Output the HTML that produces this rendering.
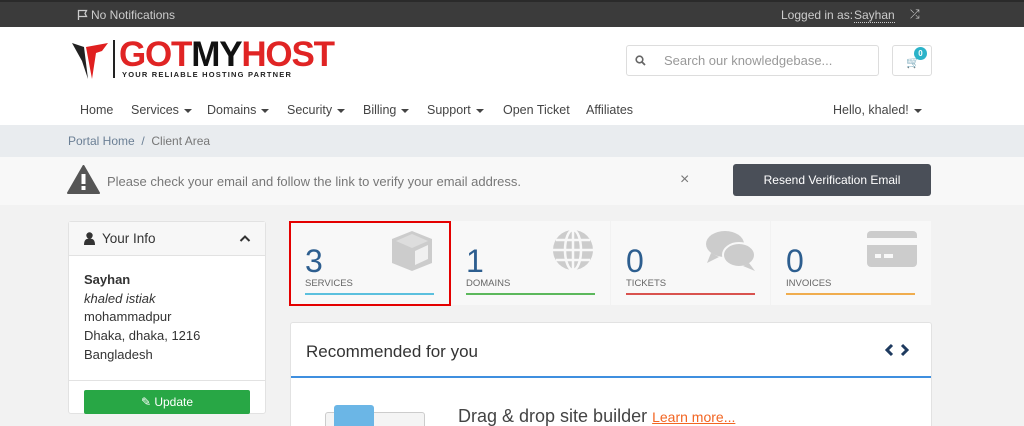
<!DOCTYPE html>
<html><head><meta charset="utf-8"><style>
*{box-sizing:border-box;margin:0;padding:0}
html,body{width:1024px;height:426px;overflow:hidden}
body{background:#f2f2f2;font-family:"Liberation Sans",sans-serif;color:#333;position:relative}
.abs{position:absolute}
.top{left:0;top:0;width:1024px;height:27px;background:#3b3b3b;border-top:2px solid #2a2a2a;color:#ccc;font-size:12px}
.header{left:0;top:27px;width:1024px;height:98px;background:#fff}
.nav span{position:absolute;top:103px;font-size:12.5px;color:#444}
.caret{display:inline-block;border-left:4px solid transparent;border-right:4px solid transparent;border-top:4px solid #444;vertical-align:middle;margin-left:5px}
.bc{left:0;top:125px;width:1024px;height:32px;background:#e9ecef;font-size:12px;color:#6b7f95}
.alert{left:0;top:157px;width:1024px;height:48px;background:#f8f8f8}
.tile{top:221px;height:84px;width:159px;background:#f8f8f8}
.tile .n{position:absolute;left:15px;top:22px;font-size:32px;color:#2d5e8f;font-weight:300}
.tile .l{position:absolute;left:15px;top:57px;font-size:9.5px;color:#666}
.tile .b{position:absolute;left:15px;top:72px;width:129px;height:2px}
</style></head><body>
<div class="abs top">
 <svg class="abs" style="left:77px;top:7px" width="12" height="12" viewBox="0 0 12 12"><path d="M1.5 11V1.5h8l-1.5 3 1.5 3h-8" fill="none" stroke="#ccc" stroke-width="1.3"/></svg>
 <span class="abs" style="left:91px;top:6px">No Notifications</span>
 <span class="abs" style="left:781px;top:6px">Logged in as:</span>
 <span class="abs" style="left:854px;top:6px;border-bottom:1px dotted #ccc">Sayhan</span>
 <span class="abs" style="left:910px;top:5px;font-size:12px">⤮</span>
</div>
<div class="abs header"></div>
<svg class="abs" style="left:72px;top:41px" width="40" height="40" viewBox="0 0 40 40"><path d="M0 2l12 4 4 32-6-18z" fill="#222"/><path d="M14 6l22-4-6 8-6 2-4 26z" fill="#e02020"/></svg>
<div class="abs" style="left:113px;top:40px;width:2px;height:38px;background:#222"></div>
<div class="abs" style="left:119px;top:38px;font-size:35px;font-weight:bold;letter-spacing:-1.2px;line-height:34px"><span style="color:#e02424">GOT</span><span style="color:#111">MY</span><span style="color:#e02424">HOST</span></div>
<div class="abs" style="left:122px;top:70px;font-size:7.5px;font-weight:bold;color:#222;letter-spacing:1.2px">YOUR RELIABLE HOSTING PARTNER</div>
<div class="abs" style="left:626px;top:45px;width:253px;height:31px;border:1px solid #ddd;border-radius:3px;background:#fff"></div>
<svg class="abs" style="left:635px;top:55px" width="11" height="11" viewBox="0 0 11 11"><circle cx="4.5" cy="4.5" r="3.3" fill="none" stroke="#666" stroke-width="1.6"/><path d="M7 7l3 3" stroke="#666" stroke-width="1.8"/></svg>
<div class="abs" style="left:664px;top:53px;font-size:13px;color:#999">Search our knowledgebase...</div>
<div class="abs" style="left:892px;top:45px;width:40px;height:31px;border:1px solid #ddd;border-radius:3px;background:#fff"></div>
<div class="abs" style="left:906px;top:56px;font-size:11px;color:#ddd">🛒</div>
<div class="abs" style="left:914px;top:47px;width:13px;height:13px;border-radius:50%;background:#2bb3c9;color:#fff;font-size:8px;text-align:center;line-height:13px;font-weight:bold">0</div>
<div class="nav">
<span style="left:80px">Home</span>
<span style="left:131px">Services<i class="caret"></i></span>
<span style="left:207px">Domains<i class="caret"></i></span>
<span style="left:287px">Security<i class="caret"></i></span>
<span style="left:363px">Billing<i class="caret"></i></span>
<span style="left:427px">Support<i class="caret"></i></span>
<span style="left:503px">Open Ticket</span>
<span style="left:586px">Affiliates</span>
<span style="left:833px">Hello, khaled!<i class="caret"></i></span>
</div>
<div class="abs bc"><span class="abs" style="left:68px;top:9px">Portal Home&nbsp; / &nbsp;<span style="color:#777">Client Area</span></span></div>
<div class="abs alert">
 <svg class="abs" style="left:67px;top:8px" width="33" height="29" viewBox="0 0 33 29"><path d="M16.5 1L32 28H1z" fill="#555" stroke="#555" stroke-linejoin="round" stroke-width="2"/><rect x="14.5" y="9" width="4" height="10" fill="#fff"/><rect x="14.5" y="21" width="4" height="4" fill="#fff"/></svg>
 <span class="abs" style="left:107px;top:17px;font-size:13px;color:#777">Please check your email and follow the link to verify your email address.</span>
 <span class="abs" style="left:680px;top:14px;font-size:16px;color:#777">×</span>
 <div class="abs" style="left:733px;top:7px;width:198px;height:32px;background:#4a4f58;border-radius:3px;color:#fff;font-size:12px;text-align:center;line-height:32px">Resend Verification Email</div>
</div>
<div class="abs" style="left:68px;top:221px;width:198px;height:193px;background:#fff;border:1px solid #e2e2e2;border-radius:3px">
 <div style="height:34px;background:#f7f7f7;border-bottom:1px solid #e2e2e2;position:relative">
  <svg class="abs" style="left:15px;top:10px" width="11" height="13" viewBox="0 0 11 13"><circle cx="5.5" cy="3.5" r="3.2" fill="#333"/><path d="M0 13c0-5 2-6.5 5.5-6.5S11 8 11 13z" fill="#333"/></svg>
  <span class="abs" style="left:33px;top:9px;font-size:13.5px">Your Info</span>
  <svg class="abs" style="left:170px;top:12px" width="12" height="8" viewBox="0 0 12 8"><path d="M1.5 7L6 2.5 10.5 7" fill="none" stroke="#333" stroke-width="2"/></svg>
 </div>
 <div style="padding:15px 15px;font-size:13px;line-height:18.7px;color:#333;height:125px;border-bottom:1px solid #e2e2e2"><b>Sayhan</b><br><i>khaled istiak</i><br>mohammadpur<br>Dhaka, dhaka, 1216<br>Bangladesh</div>
 <div class="abs" style="left:15px;top:168px;width:166px;height:24px;background:#28a745;border-radius:2px;color:#fff;font-size:12px;text-align:center;line-height:24px">✎ Update</div>
</div>
<div class="abs tile" style="left:290px"><div class="n">3</div><div class="l">SERVICES</div><div class="b" style="background:#5bc0de"></div>
<svg class="abs" style="left:100px;top:8px" width="44" height="44" viewBox="0 0 44 44"><path d="M22 2L42 10v24L22 42 2 34V10z" fill="#ccc"/><path d="M6 12L22 5l16 7-16 7z" fill="#ddd"/><path d="M25 22l13-6v14l-13 6z" fill="#f0f0f0"/></svg></div>
<div class="abs" style="left:289px;top:221px;width:162px;height:85px;border:2px solid #e40000"></div>
<div class="abs tile" style="left:451px"><div class="n">1</div><div class="l">DOMAINS</div><div class="b" style="background:#5cb85c"></div>
<svg class="abs" style="left:101px;top:8px" width="42" height="42" viewBox="0 0 42 42"><circle cx="21" cy="21" r="20" fill="#ccc"/><g stroke="#f8f8f8" stroke-width="2.5" fill="none"><ellipse cx="21" cy="21" rx="8" ry="20"/><path d="M21 1v40M1 21h40M4 11h34M4 31h34"/></g></svg></div>
<div class="abs tile" style="left:611px"><div class="n">0</div><div class="l">TICKETS</div><div class="b" style="background:#d9534f"></div>
<svg class="abs" style="left:94px;top:8px" width="52" height="42" viewBox="0 0 52 42"><ellipse cx="20" cy="15" rx="19" ry="13" fill="#ccc"/><path d="M6 24l-4 10 12-6z" fill="#ccc"/><ellipse cx="34" cy="26" rx="16" ry="12" fill="#ccc" stroke="#f8f8f8" stroke-width="2"/><path d="M44 34l6 8-12-5z" fill="#ccc"/></svg></div>
<div class="abs tile" style="left:771px;width:160px"><div class="n">0</div><div class="l">INVOICES</div><div class="b" style="background:#f0ad4e"></div>
<svg class="abs" style="left:96px;top:10px" width="50" height="36" viewBox="0 0 50 36"><rect width="50" height="36" rx="4" fill="#ccc"/><rect y="7" width="50" height="7" fill="#f8f8f8"/><rect x="8" y="23" width="6" height="4" fill="#f8f8f8"/><rect x="17" y="23" width="9" height="4" fill="#f8f8f8"/></svg></div>
<div class="abs" style="left:290px;top:322px;width:642px;height:104px;background:#fff;border:1px solid #e2e2e2;border-bottom:none;border-radius:3px 3px 0 0;overflow:hidden">
 <span class="abs" style="left:15px;top:19px;font-size:17px;color:#333">Recommended for you</span>
 <svg class="abs" style="left:592px;top:20px" width="32" height="14" viewBox="0 0 32 14"><path d="M9 2L4 7l5 5M19 2l5 5-5 5" fill="none" stroke="#1e3a5f" stroke-width="3"/></svg>
 <div class="abs" style="left:0;top:53px;width:640px;height:2px;background:#3f8fdf"></div>
 <div class="abs" style="left:34px;top:89px;width:100px;height:30px;border:1px solid #ccc;border-radius:3px;background:#f4f4f4"></div>
 <div class="abs" style="left:43px;top:82px;width:40px;height:30px;background:#6bb6e6;border-radius:3px"></div>
 <span class="abs" style="left:167px;top:83px;font-size:18px;color:#444">Drag &amp; drop site builder <span style="font-size:14px;color:#f26522;text-decoration:underline">Learn more...</span></span>
</div>
</body></html>
